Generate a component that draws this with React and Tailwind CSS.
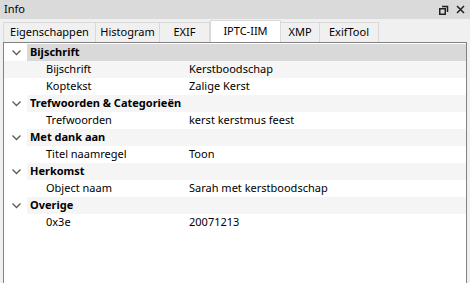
import React from 'react';

const tabs = [
    { label: 'Eigenschappen', w: 'w-[93px]' },
    { label: 'Histogram', w: 'w-[65px]' },
    { label: 'EXIF', w: 'w-[51px]' },
    { label: 'IPTC-IIM', w: 'w-[71px]', active: true },
    { label: 'XMP', w: 'w-[40px]' },
    { label: 'ExifTool', w: 'w-[60px]' },
];

const groups = [
    { title: 'Bijschrift', rows: [['Bijschrift', 'Kerstboodschap'], ['Koptekst', 'Zalige Kerst']] },
    { title: 'Trefwoorden & Categorieën', rows: [['Trefwoorden', 'kerst kerstmus feest']] },
    { title: 'Met dank aan', rows: [['Titel naamregel', 'Toon']] },
    { title: 'Herkomst', rows: [['Object naam', 'Sarah met kerstboodschap']] },
    { title: 'Overige', rows: [['0x3e', '20071213']] },
];

function Chevron() {
    return (
        <svg width="9" height="6" viewBox="0 0 9 6" className="text-[#5a5a5a]">
            <path d="M0.5 0.5 L4.5 4.5 L8.5 0.5" fill="none" stroke="currentColor" strokeWidth="1.3" />
        </svg>
    );
}

export default function App() {
    let i = 0;
    const rows = [];
    groups.forEach((g) => {
        const idx = i++;
        rows.push(
            <div key={'g' + idx} className={`flex items-center h-[17px] ${idx % 2 ? 'bg-[#f5f5f5]' : 'bg-white'}`}>
                <div className="w-[23px] h-full flex items-center justify-center pl-[1px] bg-white">
                    <Chevron />
                </div>
                <div className={`flex-1 h-full flex items-center pl-[3px] font-bold ${idx === 0 ? 'bg-[#d9d9d9]' : ''}`}>
                    {g.title}
                </div>
            </div>
        );
        g.rows.forEach(([k, v]) => {
            const ri = i++;
            rows.push(
                <div key={'r' + ri} className={`flex items-center h-[17px] ${ri % 2 ? 'bg-[#f5f5f5]' : 'bg-white'}`}>
                    <div className="w-[185px] pl-[42px] shrink-0">{k}</div>
                    <div>{v}</div>
                </div>
            );
        });
    });

    return (
        <div className="w-[470px] h-[283px] bg-[#f0f0f0] flex flex-col overflow-hidden text-[11px] text-black" style={{ fontFamily: '"Noto Sans", sans-serif' }}>
            <div className="h-[19px] bg-[#dadada] flex items-center justify-between pl-[4px] pr-[5px] shrink-0">
                <span>Info</span>
                <div className="flex items-center gap-[7px]">
                    <svg width="10" height="10" viewBox="0 0 10 10">
                        <path d="M3 1.5h5.5v5.5" fill="none" stroke="#222" strokeWidth="1.5" />
                        <rect x="0.75" y="3.75" width="5.5" height="5.5" fill="none" stroke="#222" strokeWidth="1.5" />
                    </svg>
                    <svg width="9" height="9" viewBox="0 0 9 9">
                        <path d="M1 1L8 8M8 1L1 8" stroke="#222" strokeWidth="1.5" />
                    </svg>
                </div>
            </div>
            <div className="flex items-end h-[23px] pl-[3px] shrink-0">
                {tabs.map((t) => (
                    <div
                        key={t.label}
                        className={`${t.w} flex items-center justify-center border border-b-0 ${t.active ? 'h-[22px] bg-white border-[#d9d9d9]' : 'h-[20px] bg-[#f0f0f0] border-[#d9d9d9] -ml-px first:ml-0'}`}
                    >
                        {t.label}
                    </div>
                ))}
            </div>
            <div className="flex-1 mx-[3px] border border-[#828282] border-b-0 bg-white">
                <div className="pt-[1px]">{rows}</div>
            </div>
        </div>
    );
}
